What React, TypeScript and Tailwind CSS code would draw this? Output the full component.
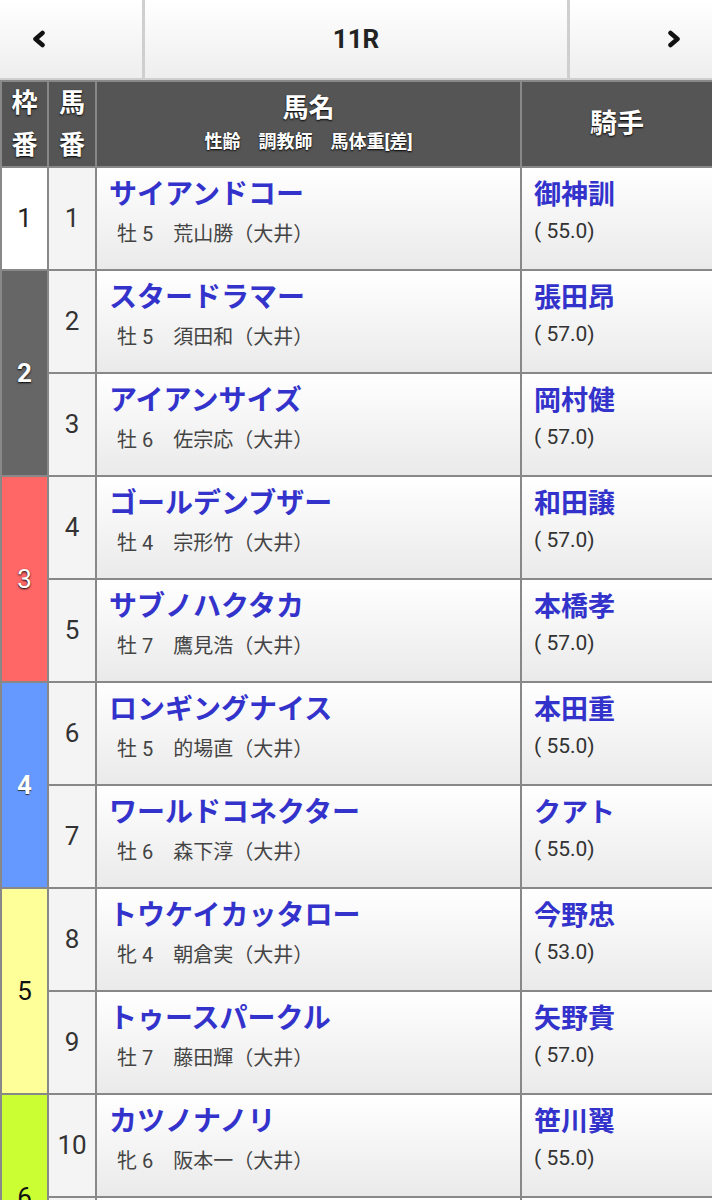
const horses = [
  { no: 1, name: "サイアンドコー", sex: "牡", age: 5, trainer: "荒山勝（大井）", jockey: "御神訓", weight: "55.0" },
  { no: 2, name: "スタードラマー", sex: "牡", age: 5, trainer: "須田和（大井）", jockey: "張田昂", weight: "57.0" },
  { no: 3, name: "アイアンサイズ", sex: "牡", age: 6, trainer: "佐宗応（大井）", jockey: "岡村健", weight: "57.0" },
  { no: 4, name: "ゴールデンブザー", sex: "牡", age: 4, trainer: "宗形竹（大井）", jockey: "和田譲", weight: "57.0" },
  { no: 5, name: "サブノハクタカ", sex: "牡", age: 7, trainer: "鷹見浩（大井）", jockey: "本橋孝", weight: "57.0" },
  { no: 6, name: "ロンギングナイス", sex: "牡", age: 5, trainer: "的場直（大井）", jockey: "本田重", weight: "55.0" },
  { no: 7, name: "ワールドコネクター", sex: "牡", age: 6, trainer: "森下淳（大井）", jockey: "クアト", weight: "55.0" },
  { no: 8, name: "トウケイカッタロー", sex: "牝", age: 4, trainer: "朝倉実（大井）", jockey: "今野忠", weight: "53.0" },
  { no: 9, name: "トゥースパークル", sex: "牡", age: 7, trainer: "藤田輝（大井）", jockey: "矢野貴", weight: "57.0" },
  { no: 10, name: "カツノナノリ", sex: "牝", age: 6, trainer: "阪本一（大井）", jockey: "笹川翼", weight: "55.0" },
  { no: 11, name: "マイネルカイト", sex: "牡", age: 5, trainer: "小林清（大井）", jockey: "森泰斗", weight: "57.0" },
]

const frames: { [k: number]: { span: number; cls: string } } = {
  1: { span: 1, cls: "bg-white text-[#222]" },
  2: { span: 2, cls: "bg-[#666666] text-white font-bold [text-shadow:0_1px_2px_#000]" },
  4: { span: 2, cls: "bg-[#ff6666] text-white [text-shadow:0_1px_2px_#000]" },
  6: { span: 2, cls: "bg-[#6699ff] text-white font-bold [text-shadow:0_1px_1px_#333]" },
  8: { span: 2, cls: "bg-[#ffff99] text-[#111]" },
  10: { span: 2, cls: "bg-[#ccff33] text-[#111]" },
}

const frameNo: { [k: number]: number } = { 1: 1, 2: 2, 4: 3, 6: 4, 8: 5, 10: 6 }

const cellBtn =
  "border-2 border-[#888] bg-gradient-to-b from-white to-[#eaeaea] align-top"

export default function App() {
  return (
    <div className="w-[712px] bg-[#888] font-['Roboto','Noto_Sans_CJK_JP',sans-serif]">
      <div className="flex h-[80px] gap-[3px] bg-[#cfcfcf] pb-[2px]">
        <button className="flex w-[142px] items-center justify-start bg-gradient-to-b from-white to-[#eeeeee] pl-[30px]">
          <svg width="18" height="18" viewBox="0 0 18 18">
            <path d="M12.5 3 L5.5 9 L12.5 15" fill="none" stroke="#111" strokeWidth="4.5" strokeLinejoin="round" strokeLinecap="round" />
          </svg>
        </button>
        <div className="flex flex-1 items-center justify-center bg-gradient-to-b from-white to-[#eeeeee] text-[26px] font-bold text-[#222]">
          11R
        </div>
        <button className="flex w-[142px] items-center justify-end bg-gradient-to-b from-white to-[#eeeeee] pr-[29px]">
          <svg width="18" height="18" viewBox="0 0 18 18">
            <path d="M5.5 3 L12.5 9 L5.5 15" fill="none" stroke="#111" strokeWidth="4.5" strokeLinejoin="round" strokeLinecap="round" />
          </svg>
        </button>
      </div>

      <table className="w-[712px] table-fixed border-collapse">
        <colgroup>
          <col className="w-[47px]" />
          <col className="w-[48px]" />
          <col className="w-[425px]" />
          <col className="w-[192px]" />
        </colgroup>
        <thead>
          <tr className="h-[85px] bg-[#555] text-white [text-shadow:0_1px_2px_#000]">
            <th className="border-2 border-[#888] text-[26px] font-bold leading-[42px]">
              枠<br />番
            </th>
            <th className="border-2 border-[#888] text-[26px] font-bold leading-[42px]">
              馬<br />番
            </th>
            <th className="border-2 border-[#888] font-bold">
              <div className="text-[26px] leading-[36px]">馬名</div>
              <div className="text-[18px] leading-[32px]">性齢　調教師　馬体重[差]</div>
            </th>
            <th className="border-2 border-[#888] text-[27px] font-bold">騎手</th>
          </tr>
        </thead>
        <tbody>
          {horses.map((h) => (
            <tr key={h.no} className="h-[103px]">
              {frames[h.no] && (
                <td
                  rowSpan={frames[h.no].span}
                  className={`border-2 border-[#888] text-center text-[26px] ${frames[h.no].cls}`}
                >
                  {frameNo[h.no]}
                </td>
              )}
              <td className="border-2 border-[#888] bg-[#f4f4f4] text-center text-[26px] text-[#333]">
                {h.no}
              </td>
              <td className={cellBtn}>
                <div className="pl-[12px] pt-[9px] text-[28px] font-bold leading-[36px] text-[#3333cc]">
                  {h.name}
                </div>
                <div className="pl-[20px] pt-[7px] text-[20px] leading-[28px] text-[#444]">
                  {h.sex} {h.age}　{h.trainer}
                </div>
              </td>
              <td className={cellBtn}>
                <div className="pl-[12px] pt-[9px] text-[27px] font-bold leading-[36px] text-[#3333cc]">
                  {h.jockey}
                </div>
                <div className="pl-[12px] pt-[4px] text-[21px] leading-[28px] text-[#333]">( {h.weight})</div>
              </td>
            </tr>
          ))}
        </tbody>
      </table>
    </div>
  )
}
